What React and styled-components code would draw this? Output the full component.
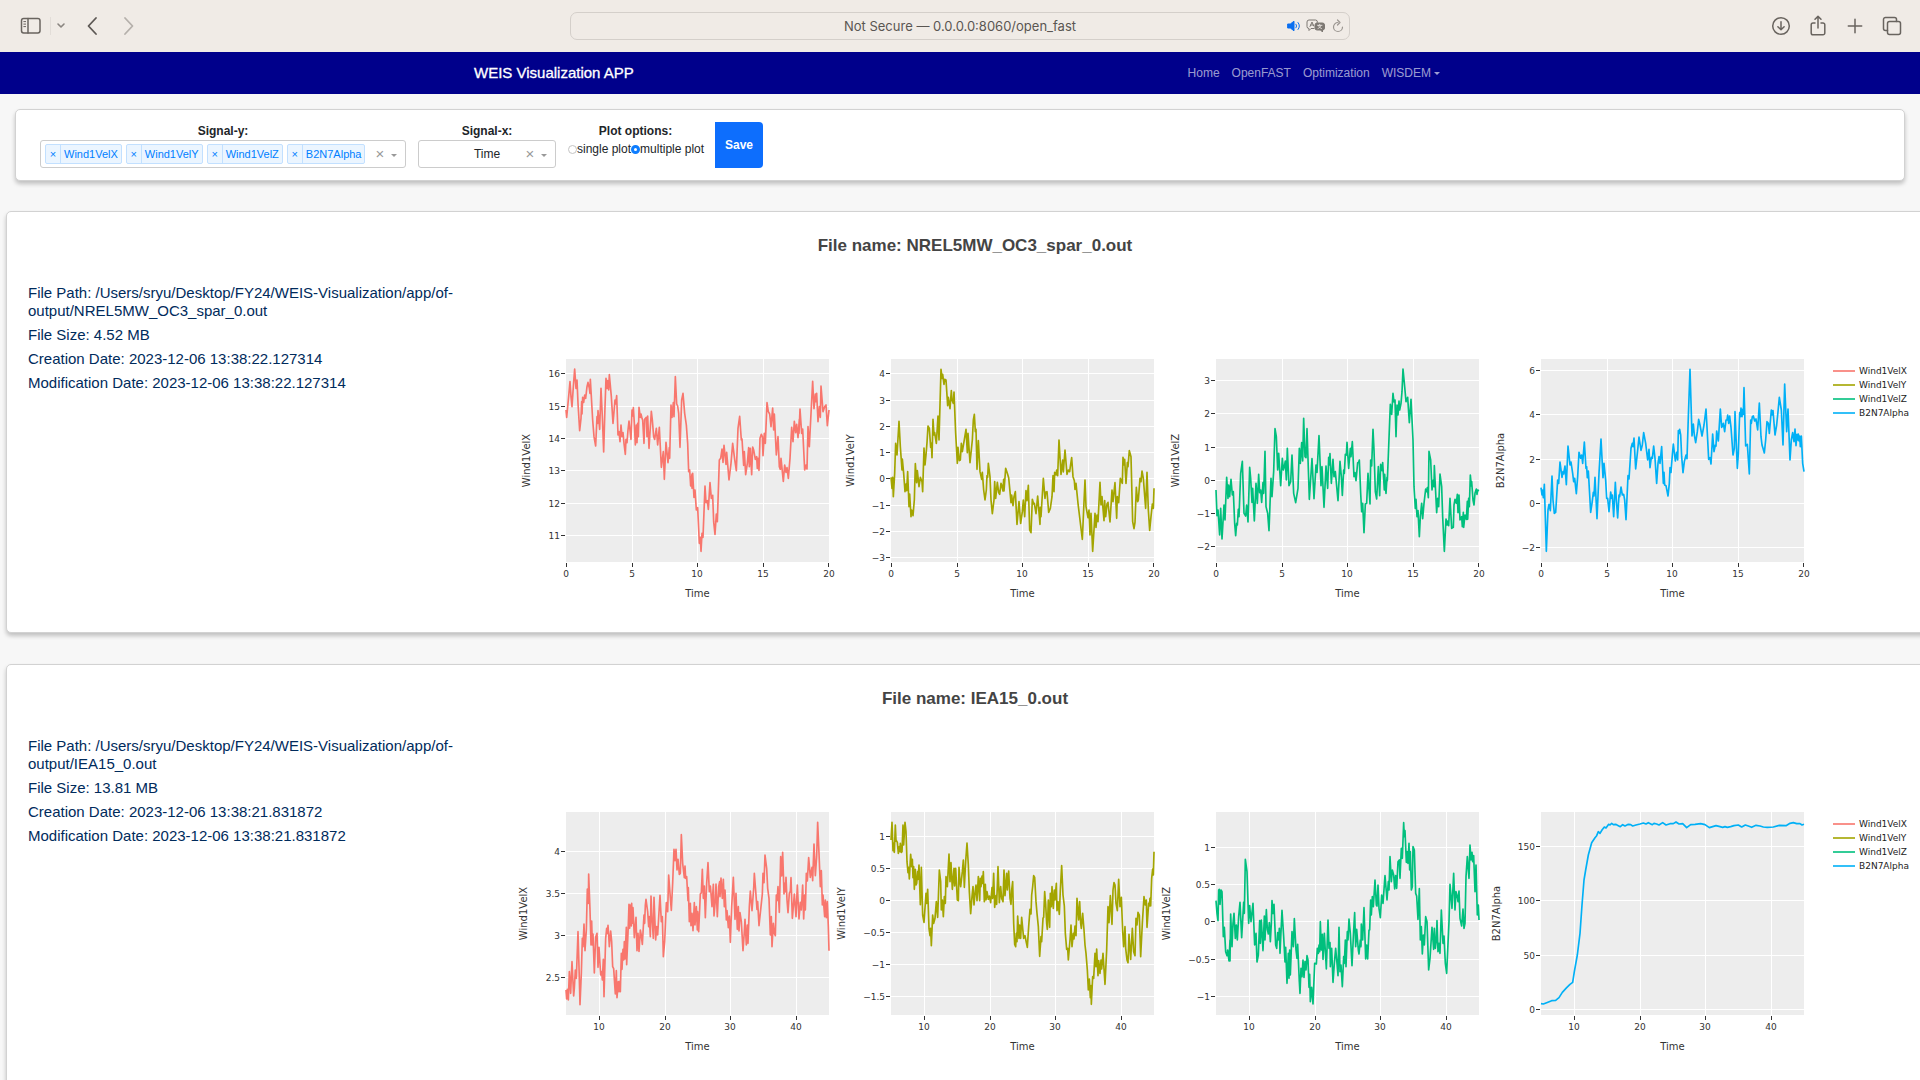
import React, { useState } from "react";
import styled, { createGlobalStyle } from "styled-components";

const GlobalStyle = createGlobalStyle`
  *, *::before, *::after { box-sizing: border-box; }
  html { overflow: hidden; }
  body {
    margin: 0;
    background: #f7f7f7;
    color: #212529;
    font: 12px/18px "Liberation Sans", Arial, sans-serif;
  }
  button, input, select { font: inherit; color: inherit; margin: 0; }
`;

/* ---------- browser toolbar ---------- */

const Toolbar = styled.header`
  display: grid;
  grid-template-columns: 1fr minmax(0, 780px) 1fr;
  align-items: center;
  height: 52px;
  padding: 0 16px;
  background: #f0ebe6;
  color: #69645f;
`;

const ToolGroup = styled.div`
  display: flex;
  align-items: center;
  justify-content: ${(p) => (p.$end ? "flex-end" : "flex-start")};
  gap: ${(p) => p.$gap}px;
`;

const IconButton = styled.button`
  display: flex;
  align-items: center;
  justify-content: center;
  width: ${(p) => p.$w || 24}px;
  height: 26px;
  padding: 0;
  border: 0;
  background: none;
  color: ${(p) => p.$color || "inherit"};
`;

const Divider = styled.span`
  width: 1px;
  height: 18px;
  background: #e2ddd8;
`;

const AddressBar = styled.form`
  display: grid;
  grid-template-columns: 72px 1fr 72px;
  align-items: center;
  height: 28px;
  border: 1px solid #d4cfca;
  border-radius: 7px;
`;

const Address = styled.input`
  grid-column: 2;
  min-width: 0;
  padding: 0;
  border: 0;
  outline: 0;
  background: none;
  color: #5a5652;
  font: 13px/20px Inter, sans-serif;
  text-align: center;
`;

const AddressIcons = styled.div`
  display: flex;
  justify-content: flex-end;
  gap: 4px;
  padding-right: 3px;
`;

/* ---------- application nav ---------- */

const Navbar = styled.nav`
  padding-right: 6px;
  background: #00008b;
`;

const NavInner = styled.div`
  display: flex;
  align-items: center;
  justify-content: space-between;
  max-width: 966px;
  height: 42px;
  margin: 0 auto;
`;

const Brand = styled.a`
  color: #fff;
  font-size: 15px;
  text-decoration: none;
  -webkit-text-stroke: 0.3px #fff;
`;

const NavLinks = styled.div`
  display: flex;
  gap: 12px;
`;

const NavLink = styled.a`
  display: flex;
  align-items: center;
  gap: 3px;
  color: rgba(255, 255, 255, 0.62);
  text-decoration: none;
`;

const Caret = styled.span`
  border-top: 3px solid ${(p) => p.$color || "currentColor"};
  border-left: 3px solid transparent;
  border-right: 3px solid transparent;
`;

/* ---------- controls ---------- */

const Main = styled.main`
  display: flex;
  flex-direction: column;
  gap: 30px;
  padding-top: 15px;
`;

const Card = styled.section`
  border: 1px solid #d2d2d2;
  border-radius: 5px;
  background: #fff;
  box-shadow: 0 3px 4px rgba(0, 0, 0, 0.22);
`;

const Controls = styled(Card)`
  display: flex;
  gap: 12px;
  margin: 0 15px;
  padding: 12px 24px;
`;

const Field = styled.div`
  width: ${(p) => (p.$w ? p.$w + "px" : "auto")};
`;

const FieldLabel = styled.label`
  display: block;
  font-weight: bold;
  text-align: center;
`;

const SelectBox = styled.div`
  position: relative;
  display: flex;
  align-items: center;
  gap: 4px;
  height: 28px;
  padding: 0 4px;
  border: 1px solid #ccc;
  border-radius: 3px;
`;

const Tag = styled.span`
  display: flex;
  height: 20px;
  border: 1px solid #c2e0ff;
  border-radius: 2px;
  background: #ebf5ff;
  color: #007eff;
  font-size: 11px;
  line-height: 18px;
`;

const TagRemove = styled.button`
  width: 15px;
  padding: 0;
  border: 0;
  border-right: 1px solid #c2e0ff;
  background: none;
  line-height: 18px;
`;

const TagText = styled.span`
  padding: 0 3px;
`;

const SelectTools = styled.div`
  position: absolute;
  top: 0;
  right: 5px;
  display: flex;
  align-items: center;
  height: 26px;
  color: #999;
`;

const ClearButton = styled.button`
  width: 16px;
  padding: 0;
  border: 0;
  background: none;
  font-size: 15px;
`;

const ArrowButton = styled.button`
  display: flex;
  justify-content: center;
  width: 12px;
  padding: 5px 0 3px;
  border: 0;
  background: none;
`;

const NativeSelect = styled.select`
  width: 100%;
  height: 26px;
  padding: 0;
  border: 0;
  outline: 0;
  background: none;
  appearance: none;
  text-align: center;
  text-align-last: center;
`;

const Radios = styled.fieldset`
  width: 135px;
  min-width: 0;
  margin: 0;
  padding: 0;
  border: 0;
  text-align: center;
  white-space: nowrap;
`;

const Legend = styled.legend`
  width: 100%;
  padding: 0;
  font-weight: bold;
`;

const RadioRow = styled.div`
  display: flex;
`;

const RadioLabel = styled.label`
  display: flex;
  align-items: center;
`;

const Radio = styled.input`
  width: 9px;
  height: 9px;
  border: 1px solid #c4c4c4;
  border-radius: 50%;
  background: #fff;
  appearance: none;
  &:checked {
    border: 3px solid #0d7dff;
  }
`;

const SaveButton = styled.button`
  width: 48px;
  padding: 0;
  border: 0;
  border-radius: 0 4px 4px 0;
  background: #0d6efd;
  color: #fff;
  font-weight: bold;
`;

/* ---------- file cards ---------- */

const FileCard = styled(Card)`
  margin: 0 -24px 1px 6px;
  padding: 24px 21px 27px;
`;

const FileTitle = styled.h2`
  margin: 0 0 28px;
  color: #444;
  font-size: 17px;
  line-height: 20px;
  text-align: center;
`;

const FileBody = styled.div`
  display: flex;
  align-items: flex-start;
`;

const FileInfo = styled.div`
  flex: 0 0 478px;
  padding-right: 40px;
  color: #002b5c;
  font-size: 15px;
  line-height: 18px;
`;

const InfoLine = styled.p`
  margin: 0 0 6px;
`;

const Plots = styled.div`
  display: grid;
  grid-template-columns: repeat(4, minmax(0, 1fr));
  flex: 1;
  margin-top: 61px;
`;

const PlotSvg = styled.svg`
  display: block;
  width: 100%;
  overflow: visible;
  font-family: "DejaVu Sans", Verdana, sans-serif;
  font-size: 9px;
  fill: #333;
`;

const AxisTitle = styled.text`
  font-size: 10px;
  text-anchor: middle;
`;

const TraceLegend = styled.ul`
  flex: 0 0 116px;
  margin: 80px 0 0;
  padding: 0 0 0 27px;
  list-style: none;
  color: #222;
  font: 9px/14px "DejaVu Sans", Verdana, sans-serif;
`;

const TraceItem = styled.li`
  display: flex;
  align-items: center;
  gap: 4px;
  &::before {
    content: "";
    width: 22px;
    border-top: 2px solid ${(p) => p.$color};
    opacity: 0.8;
  }
`;

/* ---------- data ---------- */

const NAMES = ["Wind1VelX", "Wind1VelY", "Wind1VelZ", "B2N7Alpha"];
const COLORS = ["#F8766D", "#A3A500", "#00BF7D", "#00B0F6"];
const X20 = [["0", 0], ["5", 197], ["10", 394], ["15", 592], ["20", 789]];
const X45 = [["10", 98], ["20", 296], ["30", 493], ["40", 691]];

/* Samples and ticks are kept at three units per drawn pixel; ox, oy is the plot's top left corner. */
const FILES = [
  {
    name: "NREL5MW_OC3_spar_0.out",
    size: "4.52 MB",
    date: "2023-12-06 13:38:22.127314",
    xticks: X20,
    plots: [
      {
        ox: 198, oy: 57, title: -36,
        yticks: [["16", 100], ["15", 198], ["14", 295], ["13", 391], ["12", 488], ["11", 585]],
        points: "198,210 200,232 205,180 210,125 213,170 216,200 220,140 224,87 228,145 231,120 234,190 239,272 243,235 245,185 246,222 248,172 251,187 254,165 257,175 261,140 264,127 268,145 270,160 271,118 274,170 278,240 282,290 287,318 291,230 293,250 294,212 299,268 303,145 307,230 311,336 315,200 318,115 321,145 323,122 326,150 328,104 334,170 339,250 345,180 347,192 350,167 354,285 357,275 360,305 363,255 366,290 369,278 372,310 376,343 378,298 381,308 384,270 387,243 393,298 396,210 398,228 400,203 403,250 406,315 409,255 411,308 413,250 415,290 417,202 421,232 423,222 426,235 428,240 432,310 434,238 439,232 441,290 443,228 447,325 454,214 457,240 461,290 464,298 469,265 473,315 478,262 484,382 490,335 493,418 498,307 504,368 508,323 509,355 513,195 516,232 520,188 522,230 526,110 530,192 533,198 536,220 540,322 545,180 549,160 554,220 559,255 563,310 566,395 569,390 572,438 576,402 576,445 578,400 582,472 585,450 589,510 593,503 598,610 601,592 603,634 606,580 609,592 615,438 618,488 622,482 625,508 630,428 634,475 638,466 641,545 645,583 649,522 652,545 658,360 662,355 666,327 669,367 672,316 678,373 680,337 687,420 693,370 698,310 704,358 709,392 714,265 719,229 724,300 726,297 731,376 733,335 737,404 742,370 746,323 748,380 751,325 755,404 758,321 761,330 766,358 770,350 772,385 774,355 777,391 780,295 784,283 787,290 789,347 793,280 796,310 801,188 805,215 809,222 813,260 818,204 821,270 823,222 829,345 834,290 838,380 841,388 843,355 850,424 854,375 858,397 861,383 865,415 870,355 875,262 879,305 883,244 887,278 890,253 894,293 898,238 897,280 900,207 905,280 908,267 914,390 918,375 921,387 924,260 928,320 932,240 938,124 942,206 946,162 948,185 950,160 954,245 958,200 961,232 963,138 969,215 974,200 978,195 982,257 987,210",
      },
      {
        ox: 183, oy: 57, title: -37,
        yticks: [["4", 100], ["3", 179], ["2", 258], ["1", 337], ["0", 415], ["−1", 494], ["−2", 573], ["−3", 652]],
        points: "183,412 186,445 188,412 190,470 194,400 197,310 201,345 207,244 211,320 216,390 217,357 221,400 225,455 228,432 230,452 233,395 237,500 239,462 243,530 245,510 249,527 253,480 256,371 260,428 262,392 267,440 271,412 276,425 278,455 282,324 285,375 288,345 291,308 294,258 298,265 302,322 304,310 306,353 309,238 312,285 314,278 319,310 324,228 327,300 333,88 336,115 338,103 342,133 344,118 348,120 353,197 355,172 360,206 364,152 366,180 370,190 372,156 377,280 382,370 384,322 388,362 391,360 394,310 397,335 402,305 408,268 412,338 414,280 420,368 427,300 430,240 433,223 436,275 438,268 441,388 445,302 450,395 455,418 457,397 461,450 465,480 469,450 471,407 473,412 475,370 480,410 483,480 487,521 492,480 494,425 497,475 502,427 506,458 509,463 513,430 515,435 519,453 521,418 522,453 527,385 532,400 536,413 540,455 543,488 545,465 549,497 552,470 556,455 561,553 567,485 572,550 577,515 580,480 584,530 588,452 591,482 595,436 599,570 603,578 607,478 611,492 613,490 618,521 623,468 630,553 631,502 633,530 640,415 645,475 647,457 651,455 656,517 661,505 666,470 669,407 672,455 674,397 678,405 680,390 683,407 687,300 693,403 698,360 700,396 705,330 711,403 715,390 719,395 721,380 725,353 729,410 733,422 735,448 738,430 744,490 757,598 765,420 768,500 774,533 777,510 780,585 783,520 788,634 795,520 798,562 801,525 804,545 810,427 813,495 816,470 822,542 824,482 827,530 831,492 834,487 840,546 846,450 849,485 855,428 860,535 862,470 866,488 871,415 877,430 879,352 882,375 884,358 888,430 892,368 894,380 898,332 903,350 908,545 912,566 915,547 919,442 923,485 925,480 930,415 933,425 936,393 940,415 947,505 951,397 955,510 959,571 963,530 967,492 970,505 972,445",
      },
      {
        ox: 183, oy: 57, title: -37,
        yticks: [["3", 120], ["2", 220], ["1", 320], ["0", 420], ["−1", 520], ["−2", 619]],
        points: "183,450 186,527 189,510 194,585 197,505 201,597 207,495 210,540 215,412 219,475 221,435 224,470 228,418 232,465 235,455 239,550 242,587 245,550 247,555 250,508 252,530 257,400 262,364 267,520 272,528 275,495 279,546 284,382 287,415 291,487 293,445 298,543 303,430 307,490 311,403 314,458 317,450 320,487 324,428 326,460 330,334 333,500 338,520 342,572 348,415 351,470 356,395 360,266 364,290 368,390 371,340 377,437 382,355 385,390 388,380 391,363 394,420 397,325 402,437 407,425 411,345 416,460 422,488 429,445 433,325 436,370 440,308 443,363 446,235 450,350 453,353 456,266 463,478 471,356 477,476 483,375 486,397 492,287 498,437 501,380 507,502 513,378 518,445 521,352 523,375 525,341 529,430 534,358 537,410 541,395 549,482 555,364 559,410 562,466 566,390 568,400 571,343 574,345 576,307 581,385 586,325 588,350 592,305 597,410 600,398 603,422 608,368 611,367 613,360 617,460 620,515 623,490 627,578 631,492 635,490 639,400 645,492 647,360 650,378 654,268 657,330 661,455 665,477 670,380 674,467 677,373 681,392 683,368 688,450 689,403 693,460 696,412 697,422 706,193 710,223 714,160 717,186 720,180 723,290 726,195 729,225 732,183 734,210 738,190 741,155 744,87 749,140 753,185 758,172 763,248 768,178 774,300 777,440 781,505 783,478 786,530 789,512 793,590 796,530 800,490 803,536 807,490 812,447 815,455 817,443 820,473 822,334 827,360 831,450 835,420 837,440 838,377 845,518 848,475 851,500 855,402 860,440 863,530 868,634 873,537 876,555 878,543 881,557 885,475 890,565 895,562 897,495 900,478 904,490 907,463 909,518 912,465 915,540 920,530 922,560 925,517 926,562 930,525 934,538 937,484 938,538 941,475 943,500 946,405 949,438 950,425 954,480 957,495 960,460 964,447 966,463 968,450 972,452",
      },
      {
        ox: 183, oy: 57, title: -37,
        yticks: [["6", 91], ["4", 223], ["2", 357], ["0", 490], ["−2", 622]],
        points: "183,443 186,465 188,450 190,473 193,433 199,634 204,510 207,493 211,512 216,408 219,480 223,520 227,517 233,420 236,430 240,366 246,412 249,395 251,402 255,378 259,434 264,318 270,375 273,366 278,400 281,425 284,415 289,461 293,410 297,337 302,355 305,345 308,370 313,306 318,385 320,380 322,413 325,393 332,517 336,490 340,457 342,468 345,412 351,536 357,400 363,297 369,413 372,370 377,420 380,475 383,475 387,515 392,456 395,475 397,465 401,530 406,427 409,480 413,534 417,465 419,470 423,441 427,465 431,463 434,480 438,539 444,407 447,417 453,325 457,310 459,320 462,294 467,387 472,340 477,291 483,331 487,315 491,278 497,310 503,360 507,328 510,383 514,352 517,355 521,318 525,355 530,430 534,370 537,350 540,370 545,320 550,430 552,397 554,435 558,437 564,468 568,430 570,383 573,397 577,345 580,312 586,363 590,337 593,360 595,272 597,280 599,268 602,285 605,350 609,398 613,365 618,345 621,356 625,230 630,88 636,288 640,252 643,285 647,308 652,275 656,238 660,255 666,288 672,255 678,207 682,280 686,358 690,353 693,372 698,282 702,335 706,315 708,318 710,273 715,303 721,207 725,262 730,250 734,275 738,240 741,240 743,225 746,250 749,228 753,262 759,345 763,325 765,215 768,290 772,385 775,340 779,218 781,230 783,204 786,230 788,208 790,223 792,143 797,318 802,313 808,402 812,240 814,250 817,230 820,228 824,243 828,237 833,270 838,189 843,290 846,315 849,325 853,339 857,300 861,245 865,250 868,280 874,210 877,225 879,212 885,285 890,255 894,215 898,172 904,210 909,315 914,132 920,275 924,207 930,360 934,300 938,278 942,305 945,267 948,317 951,283 953,300 955,282 957,303 959,288 961,320 964,288 968,370 972,395",
      },
    ],
  },
  {
    name: "IEA15_0.out",
    size: "13.81 MB",
    date: "2023-12-06 13:38:21.831872",
    xticks: X45,
    plots: [
      {
        ox: 198, oy: 66, title: -39,
        yticks: [["4", 184], ["3.5", 310], ["3", 436], ["2.5", 562]],
        points: "198,600 200,627 202,598 205,630 208,545 212,610 214,560 216,515 221,618 223,595 226,540 229,565 234,425 237,530 240,644 244,550 247,445 249,470 252,402 255,482 259,420 262,297 265,340 266,252 270,360 273,465 275,393 277,465 279,432 283,549 287,442 291,430 294,532 297,472 302,555 305,545 307,570 310,508 312,620 317,445 320,415 322,430 324,406 326,435 328,470 332,423 335,455 338,530 341,536 346,612 349,542 351,623 355,575 357,605 360,573 361,605 364,490 366,538 369,478 371,510 373,455 375,507 379,412 380,524 384,430 387,343 389,415 391,345 394,408 395,340 397,400 399,353 403,443 408,382 411,482 414,430 417,484 421,420 423,430 427,463 432,375 434,400 436,345 438,328 443,365 446,410 448,380 451,440 453,318 456,385 460,445 462,322 467,450 470,410 473,435 476,383 480,316 484,395 487,380 490,500 494,455 499,338 503,365 506,255 510,310 514,361 518,280 522,178 525,212 528,178 531,240 534,208 538,253 541,250 544,134 548,220 553,263 555,228 557,265 560,260 564,332 565,293 568,395 571,340 573,407 576,370 579,422 583,338 585,405 589,350 592,420 593,365 596,425 601,312 604,308 607,238 610,325 613,288 616,383 620,280 624,218 628,305 631,288 633,310 636,350 640,283 642,378 646,330 648,282 652,380 656,290 659,275 660,320 663,264 667,325 670,268 673,350 675,300 679,390 681,362 685,413 688,378 691,457 695,350 700,262 705,388 708,310 712,418 715,350 717,423 720,368 724,395 729,482 733,425 735,388 739,465 742,405 744,460 748,350 751,303 756,362 761,296 763,250 767,302 771,358 773,335 777,407 783,350 787,312 789,250 792,278 795,195 800,235 803,295 807,325 811,435 814,380 816,470 820,400 823,430 826,437 829,315 831,332 834,290 838,367 842,200 845,258 848,187 852,312 854,280 856,305 858,262 861,330 864,368 868,310 871,303 873,263 877,385 880,350 883,312 888,380 892,285 897,387 901,337 904,360 908,285 911,387 914,315 916,360 919,250 922,273 926,203 931,262 936,232 938,272 942,162 946,257 950,200 953,97 957,190 961,290 964,242 967,345 969,315 974,380 976,330 979,383 982,335 985,410 987,482",
      },
      {
        ox: 198, oy: 66, title: -46,
        yticks: [["1", 138], ["0.5", 234], ["0", 330], ["−0.5", 426], ["−1", 521], ["−1.5", 617]],
        points: "198,150 201,97 204,182 206,160 208,187 211,105 213,150 217,157 220,190 223,170 225,185 226,160 229,187 231,185 234,105 236,165 240,97 243,125 246,215 249,248 251,232 253,267 257,193 260,230 262,208 264,263 266,230 268,298 271,238 273,285 275,280 278,245 279,268 282,225 286,344 289,232 293,375 297,397 303,310 305,340 308,298 312,415 315,437 317,415 319,467 323,375 326,400 330,385 334,335 338,382 343,240 347,275 349,360 352,330 355,380 358,320 361,340 363,260 367,290 372,192 375,275 378,218 382,298 387,235 389,288 392,235 397,330 400,332 402,232 405,275 407,290 412,245 415,210 418,292 422,215 426,159 430,225 433,305 437,371 441,320 444,290 447,345 451,300 453,285 456,332 460,260 464,332 466,265 468,290 471,258 473,280 475,245 478,335 481,283 483,330 486,305 490,328 493,318 497,338 501,293 503,325 506,250 509,352 513,317 515,343 519,230 523,338 527,290 530,325 534,335 537,240 540,317 543,275 545,250 547,300 551,243 555,325 558,343 560,300 563,275 566,400 569,463 572,470 574,430 576,455 578,378 582,445 584,405 587,445 590,382 594,425 596,445 600,437 604,458 607,472 611,410 615,358 618,372 620,315 623,290 626,257 629,262 633,335 636,370 640,410 644,499 648,440 650,455 654,385 656,382 659,305 662,343 665,400 667,418 670,330 674,412 676,310 679,350 681,290 685,355 688,300 690,330 694,280 696,362 699,335 703,373 706,300 710,227 714,315 718,348 721,430 725,478 728,475 730,510 735,450 738,405 741,470 745,430 747,447 750,408 753,437 756,325 761,390 764,335 767,400 769,415 773,370 777,420 780,465 783,490 787,540 790,600 793,567 796,623 798,587 799,643 803,560 806,565 810,490 813,530 815,477 819,557 821,512 825,550 828,510 830,537 834,490 840,583 845,480 849,350 852,398 856,317 861,403 864,300 867,278 870,285 873,340 877,362 881,268 885,350 889,322 893,423 896,470 900,410 902,475 906,510 909,518 912,433 917,508 922,415 926,485 930,497 933,385 936,405 939,367 943,375 947,500 952,400 957,320 961,345 964,330 966,412 971,340 973,348 975,325 977,348 980,265 983,237 985,255 987,185",
      },
      {
        ox: 198, oy: 66, title: -46,
        yticks: [["1", 171], ["0.5", 283], ["0", 394], ["−0.5", 506], ["−1", 618]],
        points: "198,332 201,370 204,392 206,300 208,298 210,343 213,300 216,305 220,440 223,412 227,485 231,497 233,480 237,513 240,450 240,513 242,372 246,470 249,400 252,370 256,445 259,405 262,450 266,380 270,337 275,443 281,337 283,370 286,208 291,245 296,400 299,347 303,395 309,340 314,465 318,430 321,516 325,495 329,392 331,460 334,390 339,482 343,378 345,450 349,359 352,418 355,432 358,398 361,455 364,400 366,332 369,370 372,343 377,465 380,475 383,428 386,450 388,415 390,490 396,361 401,440 405,516 407,472 411,580 415,490 417,565 419,480 421,555 426,425 430,470 433,386 438,480 441,505 443,463 448,575 450,610 453,535 456,560 459,510 462,562 465,515 468,540 471,497 474,510 477,592 479,553 481,635 485,592 489,642 494,520 499,522 502,475 505,490 507,465 509,485 511,395 514,480 517,433 519,508 523,430 529,537 534,390 537,475 540,458 541,530 545,475 549,577 553,520 557,475 561,520 564,557 567,412 570,545 573,525 577,590 581,500 583,520 586,450 588,530 592,425 594,450 597,387 601,430 606,527 611,420 614,368 617,470 620,418 625,480 627,492 631,450 633,470 634,402 638,450 642,353 647,507 650,465 653,507 657,420 659,420 662,330 664,375 667,320 670,350 675,270 679,345 681,348 684,285 687,355 691,383 695,315 699,340 705,257 711,330 715,275 717,300 720,200 724,275 727,240 731,255 734,297 737,257 740,295 744,215 748,210 750,265 754,175 757,205 761,98 763,140 765,122 769,217 771,185 774,220 777,160 779,240 781,185 784,300 787,290 789,170 793,180 797,310 800,318 804,388 808,296 811,450 814,410 817,492 820,435 823,465 827,380 831,395 836,540 840,505 846,412 851,478 853,415 856,475 859,450 861,392 864,485 867,460 870,490 874,360 879,460 882,438 886,520 890,550 894,460 897,395 900,283 906,355 911,250 915,360 918,305 922,320 924,335 927,303 930,385 935,408 939,357 942,415 945,400 948,260 952,200 957,265 960,165 963,210 966,187 968,215 971,197 975,305 978,225 982,375 985,345 987,390",
      },
      {
        ox: 183, oy: 66, title: -41,
        yticks: [["150", 169], ["100", 331], ["50", 496], ["0", 658]],
        points: "183,641 190,642 200,638 215,632 227,631 237,623 247,607 260,593 270,583 278,577 283,545 292,495 300,430 306,345 312,270 317,240 325,195 335,158 345,143 350,137 355,125 360,130 366,120 373,111 378,114 386,103 390,105 395,100 400,104 407,103 415,107 421,110 428,104 435,108 445,103 452,104 458,108 468,105 480,102 490,99 498,102 505,98 517,104 522,100 530,102 537,105 548,98 558,105 570,101 580,101 588,96 597,102 608,101 620,113 632,104 645,103 662,101 675,104 688,113 698,110 708,107 720,110 728,112 735,110 742,112 752,110 762,107 775,105 785,111 796,105 805,108 815,112 828,106 840,108 850,111 862,112 880,111 898,106 918,107 930,100 940,98 950,101 960,101 966,105 972,103",
      },
    ],
  },
];

/* ---------- components ---------- */

const PLOT_W = 263;
const PLOT_H = 203;

function Plot({ name, color, plot, xticks }) {
  const { ox, oy, title, yticks, points } = plot;
  return (
    <PlotSvg viewBox="0 0 325 260" role="img" aria-label={`${name} over Time`}>
      <g transform="translate(60 14)">
        <rect width={PLOT_W} height={PLOT_H} fill="#ededed" />
        {xticks.map(([label, x]) => {
          const px = Math.round(x / 3);
          const inside = px > 0 && px < PLOT_W;
          const left = Math.min(px, PLOT_W - 1);
          return (
            <g key={label}>
              {inside && <rect x={left} width="1" height={PLOT_H} fill="#fff" />}
              <rect x={left} y={PLOT_H + 1} width="1" height="4" fill="#333" />
              <text x={px} y={PLOT_H + 15} textAnchor="middle">{label}</text>
            </g>
          );
        })}
        {yticks.map(([label, y]) => {
          const py = Math.round((y - oy) / 3);
          return (
            <g key={label}>
              <rect y={py} width={PLOT_W} height="1" fill="#fff" />
              <rect x="-5" y={py} width="4" height="1" fill="#333" />
              <text x="-6" y={py + 4} textAnchor="end">{label}</text>
            </g>
          );
        })}
        <polyline
          points={points}
          transform={`scale(${1 / 3}) translate(${-ox} ${-oy})`}
          fill="none"
          stroke={color}
          strokeWidth="5"
          strokeLinejoin="round"
        />
        <AxisTitle x={PLOT_W / 2} y={PLOT_H + 35}>Time</AxisTitle>
        <AxisTitle transform={`translate(${title} ${PLOT_H / 2}) rotate(-90)`}>{name}</AxisTitle>
      </g>
    </PlotSvg>
  );
}

function FilePanel({ file }) {
  return (
    <FileCard>
      <FileTitle>{`File name: ${file.name}`}</FileTitle>
      <FileBody>
        <FileInfo>
          <InfoLine>
            {`File Path: /Users/sryu/Desktop/FY24/WEIS-Visualization/app/of-output/${file.name}`}
          </InfoLine>
          <InfoLine>{`File Size: ${file.size}`}</InfoLine>
          <InfoLine>{`Creation Date: ${file.date}`}</InfoLine>
          <InfoLine>{`Modification Date: ${file.date}`}</InfoLine>
        </FileInfo>
        <Plots>
          {file.plots.map((plot, i) => (
            <Plot key={NAMES[i]} name={NAMES[i]} color={COLORS[i]} plot={plot} xticks={file.xticks} />
          ))}
        </Plots>
        <TraceLegend>
          {NAMES.map((name, i) => (
            <TraceItem key={name} $color={COLORS[i]}>{name}</TraceItem>
          ))}
        </TraceLegend>
      </FileBody>
    </FileCard>
  );
}

function Icon({ w = 20, h = 20, children, sw = 1.5 }) {
  return (
    <svg width={w} height={h} viewBox={`0 0 ${w} ${h}`} fill="none" stroke="currentColor"
      strokeWidth={sw} strokeLinecap="round" strokeLinejoin="round" aria-hidden="true">
      {children}
    </svg>
  );
}

function BrowserBar() {
  return (
    <Toolbar>
      <ToolGroup $gap={4}>
        <IconButton $w={30} aria-label="Sidebar">
          <Icon w={22} h={18}>
            <rect x="1.5" y="1.5" width="18.5" height="14.5" rx="2.2" />
            <path d="M8 1.5v14.5" />
            <path d="M3.8 4.6h1.8M3.8 7.1h1.8M3.8 9.6h1.8" strokeWidth="1" />
          </Icon>
        </IconButton>
        <Divider />
        <IconButton $w={12} aria-label="Tab groups" $color="#8a8580">
          <Icon w={10} h={8} sw={1.6}><path d="M2 2l3 3 3-3" /></Icon>
        </IconButton>
        <ToolGroup $gap={6}>
          <IconButton $w={42} aria-label="Back" $color="#5d5854">
            <Icon w={12} h={20} sw={1.8}><path d="M10 2L2.500 10l7.500 8" /></Icon>
          </IconButton>
          <IconButton $w={20} aria-label="Forward" $color="#b5b0ab">
            <Icon w={12} h={20} sw={1.8}><path d="M2 2l7.500 8-7.500 8" /></Icon>
          </IconButton>
        </ToolGroup>
      </ToolGroup>
      <AddressBar onSubmit={(e) => e.preventDefault()}>
        <Address aria-label="Address" defaultValue="Not Secure — 0.0.0.0:8060/open_fast" />
        <AddressIcons>
          <IconButton type="button" $w={16} aria-label="Mute" $color="#0a6ff0">
            <Icon w={14} h={12} sw={1}>
              <path d="M1 4h2.3L7 1.2v9.6L3.3 8H1z" fill="currentColor" />
              <path d="M9 4.2a3 3 0 010 3.6M11 2.5a5.5 5.5 0 010 7" />
            </Icon>
          </IconButton>
          <IconButton type="button" $w={20} aria-label="Translate" $color="#7d7873">
            <Icon w={20} h={14} sw={1}>
              <path d="M8 9.5H5L3 11.5V9.5a2 2 0 01-2-2V3a2 2 0 012-2h6.500a2 2 0 012 2" />
              <path d="M4 7.500L6 3l1.700 4M4.800 6h2.400" />
              <path d="M11 4h5.500a2 2 0 012 2v3a2 2 0 01-2 2v2l-2-2H11a2 2 0 01-2-2V6a2 2 0 012-2z" fill="currentColor" />
              <path d="M11.500 6.300h4.500M13.700 5.300v1M15 6.500c-.500 1.500-1.700 2.500-3 3M12.500 6.500c.500 1.500 1.700 2.500 3 3" stroke="#f0ebe6" strokeWidth="0.800" />
            </Icon>
          </IconButton>
          <IconButton type="button" $w={16} aria-label="Reload" $color="#9b9691">
            <Icon w={12} h={14} sw={1.2}>
              <path d="M6 3.500a4.500 4.500 0 104.500 4.500M5.500 1l2.500 2.500L5.500 6" />
            </Icon>
          </IconButton>
        </AddressIcons>
      </AddressBar>
      <ToolGroup $end $gap={13}>
        <IconButton aria-label="Downloads">
          <Icon>
            <circle cx="10" cy="10" r="8.300" />
            <path d="M10 5.800v7.800M6.900 10.700L10 13.800l3.100-3.100" />
          </Icon>
        </IconButton>
        <IconButton aria-label="Share">
          <Icon w={18} h={22}>
            <path d="M6 8H4a1.800 1.800 0 00-1.800 1.800V18A1.800 1.800 0 004 19.800h10a1.800 1.800 0 001.800-1.800V9.800A1.800 1.800 0 0014 8h-2" />
            <path d="M9 13V1.500M6 4.300l3-2.900 3 2.900" />
          </Icon>
        </IconButton>
        <IconButton aria-label="New tab">
          <Icon w={16} h={16}><path d="M8 1.300v13.400M1.300 8h13.400" /></Icon>
        </IconButton>
        <IconButton aria-label="Tab overview">
          <Icon>
            <rect x="5.500" y="5.500" width="13" height="13" rx="2" />
            <path d="M5.500 14.500H3.500a2 2 0 01-2-2v-9a2 2 0 012-2h9a2 2 0 012 2v2" />
          </Icon>
        </IconButton>
      </ToolGroup>
    </Toolbar>
  );
}

export default function App() {
  const [mode, setMode] = useState("multiple");
  return (
    <>
      <GlobalStyle />
      <BrowserBar />
      <Navbar>
        <NavInner>
          <Brand href="#">WEIS Visualization APP</Brand>
          <NavLinks>
            <NavLink href="#">Home</NavLink>
            <NavLink href="#">OpenFAST</NavLink>
            <NavLink href="#">Optimization</NavLink>
            <NavLink href="#">WISDEM <Caret /></NavLink>
          </NavLinks>
        </NavInner>
      </Navbar>
      <Main>
        <Controls>
          <Field $w={366}>
            <FieldLabel as="span" id="signal-y">Signal-y:</FieldLabel>
            <SelectBox role="group" aria-labelledby="signal-y">
              {NAMES.map((name) => (
                <Tag key={name}>
                  <TagRemove aria-label={`Remove ${name}`}>×</TagRemove>
                  <TagText>{name}</TagText>
                </Tag>
              ))}
              <SelectTools>
                <ClearButton aria-label="Clear all">×</ClearButton>
                <ArrowButton aria-label="Open"><Caret $color="#999" /></ArrowButton>
              </SelectTools>
            </SelectBox>
          </Field>
          <Field $w={138}>
            <FieldLabel htmlFor="signal-x">Signal-x:</FieldLabel>
            <SelectBox>
              <NativeSelect id="signal-x" defaultValue="Time">
                <option>Time</option>
              </NativeSelect>
              <SelectTools>
                <ClearButton aria-label="Clear value">×</ClearButton>
                <ArrowButton aria-label="Open"><Caret $color="#999" /></ArrowButton>
              </SelectTools>
            </SelectBox>
          </Field>
          <Radios>
            <Legend>Plot options:</Legend>
            <RadioRow>
              {["single", "multiple"].map((m) => (
                <RadioLabel key={m}>
                  <Radio type="radio" name="mode" checked={mode === m} onChange={() => setMode(m)} />
                  {`${m} plot`}
                </RadioLabel>
              ))}
            </RadioRow>
          </Radios>
          <SaveButton>Save</SaveButton>
        </Controls>
        {FILES.map((file) => <FilePanel key={file.name} file={file} />)}
      </Main>
    </>
  );
}
